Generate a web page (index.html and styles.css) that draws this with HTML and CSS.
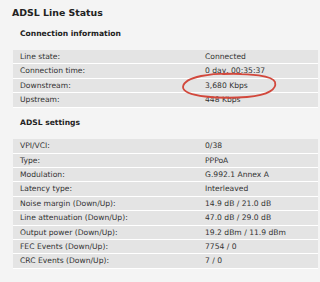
FILE: index.html
```html
<!DOCTYPE html>
<html lang="en">
<head>
  <meta charset="UTF-8">
  <title>ADSL Line Status</title>
  <link rel="stylesheet" href="styles.css">
</head>
<body>
  <h1>ADSL Line Status</h1>

  <h2>Connection information</h2>
  <table class="status">
    <tr><td>Line state:</td><td>Connected</td></tr>
    <tr><td>Connection time:</td><td>0 day, 00:35:37</td></tr>
    <tr>
      <td>Downstream:</td>
      <td class="marked">3,680 Kbps
        <svg class="circle" width="98" height="30" viewBox="0 0 98 30">
          <path d="M60 3 C 30 1, 3 6, 2 16 C 2 26, 40 28, 66 26 C 88 24, 96 18, 94 11 C 92 5, 70 2, 42 3" fill="none" stroke="#d2483c" stroke-width="1.8" stroke-linecap="round"/>
        </svg>
      </td>
    </tr>
    <tr><td>Upstream:</td><td>448 Kbps</td></tr>
  </table>

  <h2 class="next">ADSL settings</h2>
  <table class="status">
    <tr><td>VPI/VCI:</td><td>0/38</td></tr>
    <tr><td>Type:</td><td>PPPoA</td></tr>
    <tr><td>Modulation:</td><td>G.992.1 Annex A</td></tr>
    <tr><td>Latency type:</td><td>Interleaved</td></tr>
    <tr><td>Noise margin (Down/Up):</td><td>14.9 dB / 21.0 dB</td></tr>
    <tr><td>Line attenuation (Down/Up):</td><td>47.0 dB / 29.0 dB</td></tr>
    <tr><td>Output power (Down/Up):</td><td>19.2 dBm / 11.9 dBm</td></tr>
    <tr><td>FEC Events (Down/Up):</td><td>7754 / 0</td></tr>
    <tr><td>CRC Events (Down/Up):</td><td>7 / 0</td></tr>
  </table>
</body>
</html>
```

FILE: styles.css
```css
body {
  margin: 0;
  background-color: #f4f4f4;
  font-family: "DejaVu Sans", Verdana, sans-serif;
  color: #333;
}
h1 {
  font-size: 9.4px;
  line-height: 12px;
  margin: 7px 0 0 12px;
  color: #222;
}
h2 {
  font-size: 7.6px;
  line-height: 12px;
  margin: 9px 0 0 20px;
  color: #222;
}
h2.next {
  margin-top: 9.5px;
}
.status {
  margin: 10px 0 0 13px;
  width: 305px;
  border-collapse: collapse;
  font-size: 7.6px;
}
.status td {
  background-color: #e4e4e4;
  border-bottom: 1px solid #fff;
  line-height: 13.4px;
  padding: 0 0 0 7px;
  vertical-align: middle;
}
.status td:first-child {
  width: 185px;
}
.status td:last-child {
  padding-left: 0;
}
.marked {
  position: relative;
}
.circle {
  position: absolute;
  left: -24px;
  top: -8px;
}
```
